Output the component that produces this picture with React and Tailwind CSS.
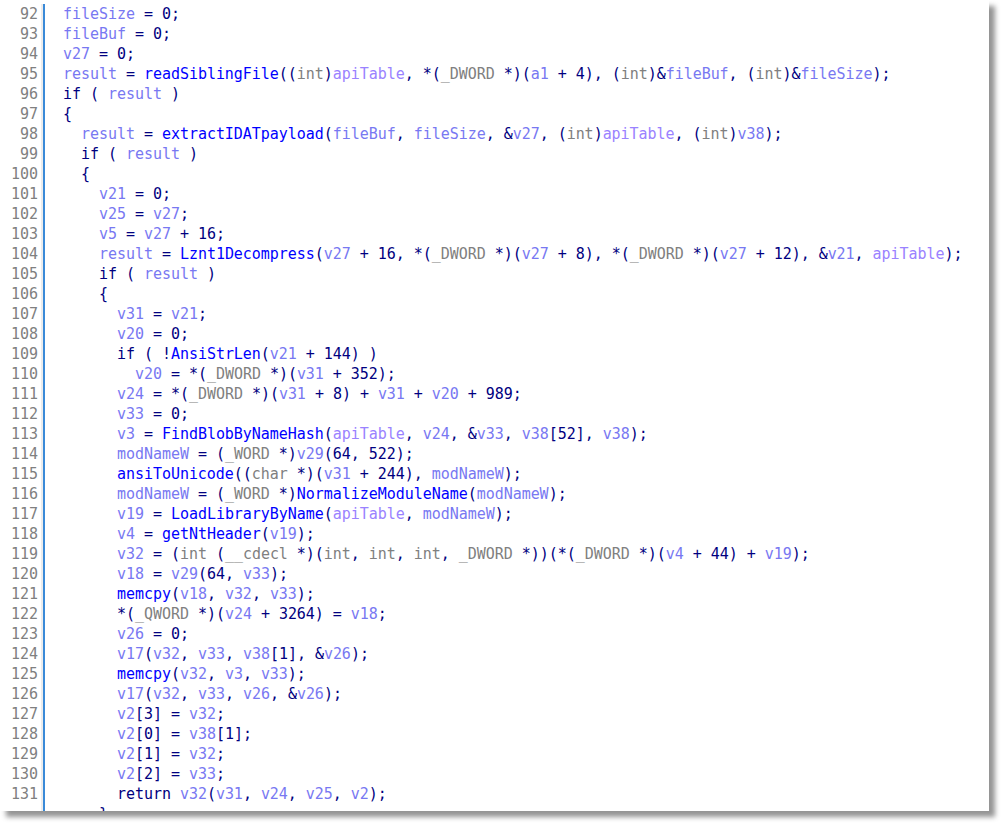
import React from "react";

const LINES = [
  "fileSize = 0;",
  "fileBuf = 0;",
  "v27 = 0;",
  "result = readSiblingFile((int)apiTable, *(_DWORD *)(a1 + 4), (int)&fileBuf, (int)&fileSize);",
  "if ( result )",
  "{",
  "  result = extractIDATpayload(fileBuf, fileSize, &v27, (int)apiTable, (int)v38);",
  "  if ( result )",
  "  {",
  "    v21 = 0;",
  "    v25 = v27;",
  "    v5 = v27 + 16;",
  "    result = Lznt1Decompress(v27 + 16, *(_DWORD *)(v27 + 8), *(_DWORD *)(v27 + 12), &v21, apiTable);",
  "    if ( result )",
  "    {",
  "      v31 = v21;",
  "      v20 = 0;",
  "      if ( !AnsiStrLen(v21 + 144) )",
  "        v20 = *(_DWORD *)(v31 + 352);",
  "      v24 = *(_DWORD *)(v31 + 8) + v31 + v20 + 989;",
  "      v33 = 0;",
  "      v3 = FindBlobByNameHash(apiTable, v24, &v33, v38[52], v38);",
  "      modNameW = (_WORD *)v29(64, 522);",
  "      ansiToUnicode((char *)(v31 + 244), modNameW);",
  "      modNameW = (_WORD *)NormalizeModuleName(modNameW);",
  "      v19 = LoadLibraryByName(apiTable, modNameW);",
  "      v4 = getNtHeader(v19);",
  "      v32 = (int (__cdecl *)(int, int, int, _DWORD *))(*(_DWORD *)(v4 + 44) + v19);",
  "      v18 = v29(64, v33);",
  "      memcpy(v18, v32, v33);",
  "      *(_QWORD *)(v24 + 3264) = v18;",
  "      v26 = 0;",
  "      v17(v32, v33, v38[1], &v26);",
  "      memcpy(v32, v3, v33);",
  "      v17(v32, v33, v26, &v26);",
  "      v2[3] = v32;",
  "      v2[0] = v38[1];",
  "      v2[1] = v32;",
  "      v2[2] = v33;",
  "      return v32(v31, v24, v25, v2);",
  "    }",
];

const KEYWORDS = new Set(["if", "return"]);
const TYPES = new Set(["int", "char", "_DWORD", "_WORD", "_QWORD", "__cdecl"]);
const FUNCS = new Set([
  "readSiblingFile",
  "extractIDATpayload",
  "Lznt1Decompress",
  "AnsiStrLen",
  "FindBlobByNameHash",
  "ansiToUnicode",
  "NormalizeModuleName",
  "LoadLibraryByName",
  "getNtHeader",
  "memcpy",
]);
const GLOBALS = new Set(["apiTable"]);

function tokenize(line) {
  const out = [];
  const re = /([A-Za-z_][A-Za-z0-9_]*)|(\d+)|(\s+)|(.)/g;
  let m;
  while ((m = re.exec(line))) {
    if (m[1]) {
      const w = m[1];
      let cls = "text-[#7878f2]";
      if (KEYWORDS.has(w)) cls = "text-[#000080]";
      else if (TYPES.has(w)) cls = "text-[#808080]";
      else if (FUNCS.has(w)) cls = "text-[#0000ff]";
      else if (GLOBALS.has(w)) cls = "text-[#9a82ff]";
      out.push([cls, w]);
    } else if (m[2]) {
      out.push(["text-[#000080]", m[2]]);
    } else if (m[3]) {
      out.push(["", m[3]]);
    } else {
      out.push(["text-[#000080]", m[4]]);
    }
  }
  return out;
}

export default function App() {
  return (
    <div className="w-[1007px] h-[829px] bg-white">
      <div className="w-[989px] h-[811px] bg-white overflow-hidden shadow-[6px_6px_5px_rgba(0,0,0,0.42)] pt-[4px]">
        <div
          className="flex h-full text-[15px] leading-[20px] tracking-[-0.04px] whitespace-pre"
          style={{ fontFamily: '"DejaVu Sans Mono", "Liberation Mono", monospace' }}
        >
          <div className="w-[43px] shrink-0 border-r-2 border-[#ececec] pr-[3px] text-right text-[#808080]">
            {LINES.slice(0, LINES.length - 1).map((_, i) => (
              <div key={i} className="h-[20px]">
                {92 + i}
              </div>
            ))}
          </div>
          <div className="flex-1 border-l-[2px] border-[#3a8ad8] pl-[18px]">
            {LINES.map((line, i) => (
              <div key={i} className="h-[20px]">
                {tokenize(line).map(([cls, t], j) => (
                  <span key={j} className={cls}>
                    {t}
                  </span>
                ))}
              </div>
            ))}
          </div>
        </div>
      </div>
    </div>
  );
}
